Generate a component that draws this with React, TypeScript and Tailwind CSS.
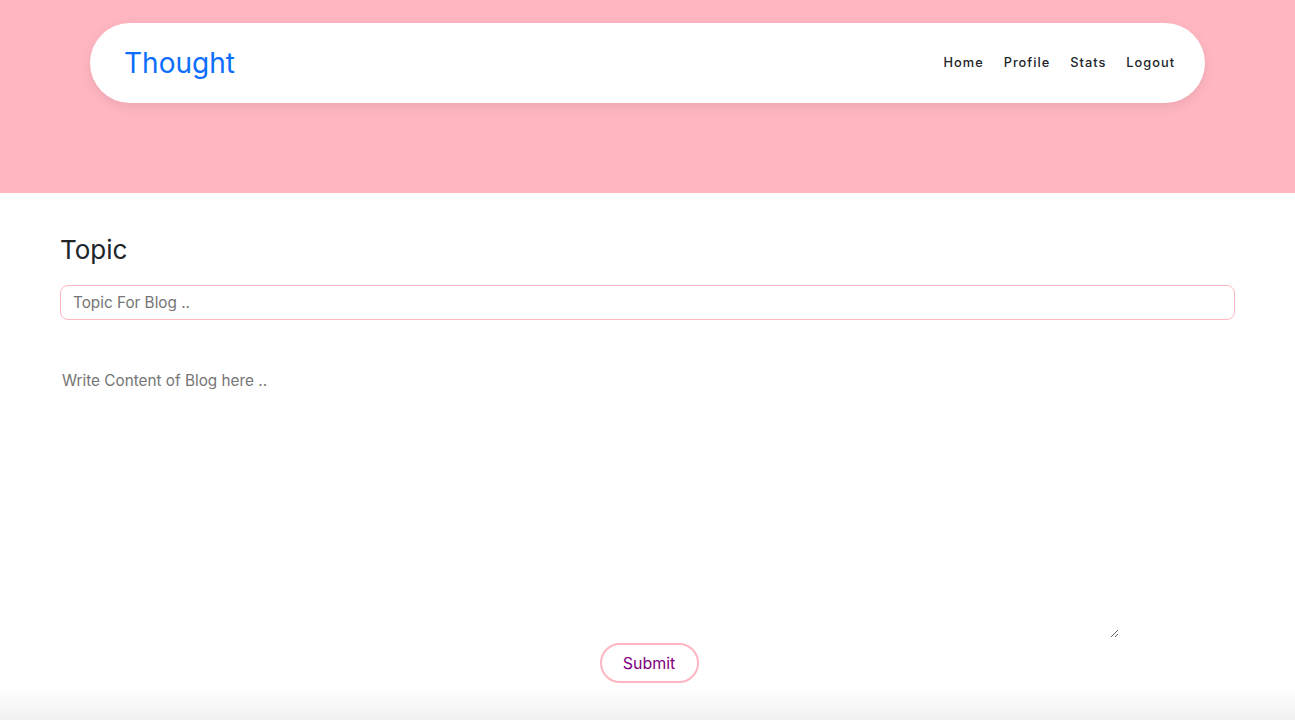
export default function App() {
  const links = ["Home", "Profile", "Stats", "Logout"];

  return (
    <div className="min-h-[720px] bg-white flex flex-col" style={{ fontFamily: "Inter, 'Noto Sans', sans-serif" }}>
      {/* Header */}
      <header className="bg-[#ffb6c1] h-[193px] pt-[23px] px-[90px]">
        <nav className="h-[80px] bg-white rounded-full shadow-[0_4px_12px_rgba(0,0,0,0.08)] flex items-center justify-between pl-[34px] pr-[30px]">
          <span className="text-[28px] text-[#0d6efd] leading-none">Thought</span>
          <div className="flex items-center gap-[20px]">
            {links.map((l) => (
              <a key={l} href="#" className="text-[12.8px] font-medium tracking-[1px] text-[#212529]">
                {l}
              </a>
            ))}
          </div>
        </nav>
      </header>

      {/* Form */}
      <main className="flex-1 px-[60px] pt-[41px] flex flex-col">
        <h2 className="text-[26px] text-[#212529] leading-[32px] mb-[19px]">Topic</h2>
        <input
          type="text"
          placeholder="Topic For Blog .."
          className="w-full h-[35px] border border-[#ffb6c1] rounded-lg px-[12px] text-[15.3px] placeholder:text-[#757575] outline-none"
        />
        <textarea
          placeholder="Write Content of Blog here .."
          className="mt-[47px] w-[1059px] h-[271px] px-[2px] py-[2px] text-[15.3px] leading-[24px] placeholder:text-[#757575] outline-none border-none"
        />
        <div className="flex justify-center mt-[5px] ml-[3px]">
          <button className="w-[99px] h-[40px] rounded-full border-2 border-[#ffb6c1] text-[#800080] text-[16px] bg-white">
            Submit
          </button>
        </div>
      </main>

      <div className="h-[31px] bg-gradient-to-b from-white to-[#f0f0f0]" />
    </div>
  );
}
